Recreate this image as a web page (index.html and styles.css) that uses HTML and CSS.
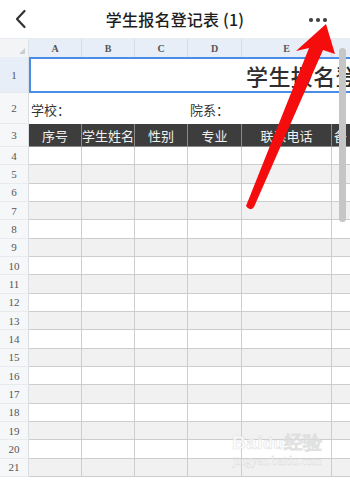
FILE: index.html
```html
<!DOCTYPE html>
<html lang="zh">
<head>
<meta charset="utf-8">
<link rel="stylesheet" href="styles.css">
</head>
<body>
<div class="page">
  <header class="topbar">
    <svg class="back" width="14" height="20" viewBox="0 0 14 20"><path d="M10.5 2 L3 10 L10.5 18" fill="none" stroke="#333" stroke-width="2.2" stroke-linecap="round" stroke-linejoin="round"/></svg>
    <div class="title">学生报名登记表 (1)</div>
    <div class="more"><i></i><i></i><i></i></div>
  </header>

  <div class="sheet">
    <div class="r colhdr">
      <div class="corner"><span class="tri"></span></div>
      <div class="ch">A</div><div class="ch">B</div><div class="ch">C</div><div class="ch">D</div><div class="ch">E</div><div class="ch"></div>
    </div>

    <div class="r row1">
      <div class="rh sel">1</div>
      <div class="merged"><span>学生报名登</span></div>
    </div>

    <div class="r row2">
      <div class="rh">2</div>
      <div class="lab lab1">学校：</div>
      <div class="lab lab2">院系：</div>
    </div>

    <div class="r row3">
      <div class="rh">3</div>
      <div class="th">序号</div><div class="th">学生姓名</div><div class="th">性别</div><div class="th">专业</div><div class="th">联系电话</div><div class="th clip">备</div>
    </div>

    <div class="r d"><div class="rh">4</div><i></i><i></i><i></i><i></i><i></i><i></i></div>
    <div class="r d g"><div class="rh">5</div><i></i><i></i><i></i><i></i><i></i><i></i></div>
    <div class="r d"><div class="rh">6</div><i></i><i></i><i></i><i></i><i></i><i></i></div>
    <div class="r d g"><div class="rh">7</div><i></i><i></i><i></i><i></i><i></i><i></i></div>
    <div class="r d"><div class="rh">8</div><i></i><i></i><i></i><i></i><i></i><i></i></div>
    <div class="r d g"><div class="rh">9</div><i></i><i></i><i></i><i></i><i></i><i></i></div>
    <div class="r d"><div class="rh">10</div><i></i><i></i><i></i><i></i><i></i><i></i></div>
    <div class="r d g"><div class="rh">11</div><i></i><i></i><i></i><i></i><i></i><i></i></div>
    <div class="r d"><div class="rh">12</div><i></i><i></i><i></i><i></i><i></i><i></i></div>
    <div class="r d g"><div class="rh">13</div><i></i><i></i><i></i><i></i><i></i><i></i></div>
    <div class="r d"><div class="rh">14</div><i></i><i></i><i></i><i></i><i></i><i></i></div>
    <div class="r d g"><div class="rh">15</div><i></i><i></i><i></i><i></i><i></i><i></i></div>
    <div class="r d"><div class="rh">16</div><i></i><i></i><i></i><i></i><i></i><i></i></div>
    <div class="r d g"><div class="rh">17</div><i></i><i></i><i></i><i></i><i></i><i></i></div>
    <div class="r d"><div class="rh">18</div><i></i><i></i><i></i><i></i><i></i><i></i></div>
    <div class="r d g"><div class="rh">19</div><i></i><i></i><i></i><i></i><i></i><i></i></div>
    <div class="r d"><div class="rh">20</div><i></i><i></i><i></i><i></i><i></i><i></i></div>
    <div class="r d g"><div class="rh">21</div><i></i><i></i><i></i><i></i><i></i><i></i></div>
  </div>

  <div class="scrollbar"></div>

  <div class="watermark">
    <div class="wm1">Bai<span class="paw">du</span>经验</div>
    <div class="wm2">jingyan.baidu.com</div>
  </div>

  <svg class="arrow" width="350" height="480" viewBox="0 0 350 480">
    <path d="M326 24 L335 54 L323 50 L254 207 Q250 212 246 206 L309 48 L296 51 Z" fill="#f50d0d"/>
  </svg>
</div>
</body>
</html>
```

FILE: styles.css
```css
* { box-sizing: border-box; }
html, body { margin: 0; padding: 0; }
body {
  width: 350px;
  height: 480px;
  overflow: hidden;
  background: #fff;
  font-family: "Noto Sans CJK SC", "Noto Sans", sans-serif;
}
.page {
  position: relative;
  width: 350px;
  height: 480px;
  overflow: hidden;
}

.topbar {
  height: 38px;
  display: flex;
  align-items: center;
  justify-content: center;
  position: relative;
  background: #fff;
}
.back {
  position: absolute;
  left: 14px;
  top: 9px;
}
.title {
  font-size: 16px;
  font-weight: 500;
  color: #1e1e1e;
  letter-spacing: 0.2px;
}
.more {
  position: absolute;
  left: 309px;
  top: 18px;
  display: flex;
  gap: 3.5px;
}
.more i {
  width: 3.5px;
  height: 3.5px;
  border-radius: 50%;
  background: #444;
  display: block;
}

.sheet {
  width: 352px;
}
.r {
  display: grid;
  grid-template-columns: 29px 53px 53px 53px 54px 90px 20px;
}

.colhdr {
  height: 19px;
  background: #e7eef8;
  border-top: 1px solid #e8ebef;
}
.corner {
  background: #f3f4f6;
  position: relative;
  border-right: 1px solid #dde3ea;
}
.tri {
  position: absolute;
  right: 3px;
  bottom: 3px;
  width: 0;
  height: 0;
  border-left: 6px solid transparent;
  border-bottom: 6px solid #c9ccd1;
}
.ch {
  font-family: "Liberation Serif", serif;
  font-weight: bold;
  font-size: 10px;
  color: #555;
  display: flex;
  align-items: center;
  justify-content: center;
  border-right: 1px solid #d5dde8;
  padding-top: 1px;
}

.rh {
  background: #f6f7f9;
  border-right: 1px solid #dadde2;
  border-bottom: 1px solid #e8eaee;
  font-family: "Liberation Serif", serif;
  font-size: 11px;
  color: #555;
  display: flex;
  align-items: center;
  justify-content: center;
}
.rh.sel { background: #e7eef8; }

.row1 { height: 36px; }
.merged {
  grid-column: 2 / -1;
  border: 2px solid #4a8de6;
  overflow: hidden;
  white-space: nowrap;
  display: flex;
  align-items: center;
  padding-left: 215px;
}
.merged span {
  font-size: 22px;
  letter-spacing: 0.4px;
  color: #2e2e2e;
  font-weight: 500;
}

.row2 { height: 31px; }
.lab {
  font-size: 13px;
  color: #333;
  display: flex;
  align-items: center;
  padding-left: 2px;
  padding-top: 2px;
}
.lab1 { grid-column: 2 / 5; }
.lab2 { grid-column: 5 / -1; }

.row3 { height: 23px; }
.th {
  background: #3d3d3d;
  color: #f0f0f0;
  font-size: 13px;
  display: flex;
  align-items: center;
  justify-content: center;
  border-right: 1px solid #8a8a8a;
  border-bottom: 1px solid #8a8a8a;
  white-space: nowrap;
  overflow: hidden;
}
.th.clip { justify-content: flex-start; padding-left: 2px; }

.d { height: 18.33px; }
.d i {
  display: block;
  background: #fff;
  border-right: 1px solid #cdcdcd;
  border-bottom: 1px solid #cdcdcd;
}
.d.g i { background: #f1f1f1; }

.scrollbar {
  position: absolute;
  left: 339px;
  top: 48px;
  width: 7px;
  height: 174px;
  border-radius: 4px;
  background: #c6c6c6;
}

.watermark {
  position: absolute;
  left: 232px;
  top: 432px;
  color: #fff;
  text-align: center;
  opacity: 0.85;
}
.wm1 {
  font-family: "Liberation Sans", sans-serif;
  font-size: 19px;
  font-weight: bold;
  line-height: 22px;
  -webkit-text-stroke: 0.6px #dcdcdc;
  letter-spacing: 0.5px;
}
.wm1 .paw { font-size: 16px; }
.wm2 {
  font-family: "Liberation Serif", serif;
  font-size: 12px;
  line-height: 13px;
  -webkit-text-stroke: 0.4px #dadada;
}

.arrow {
  position: absolute;
  left: 0;
  top: 0;
  pointer-events: none;
}
```
